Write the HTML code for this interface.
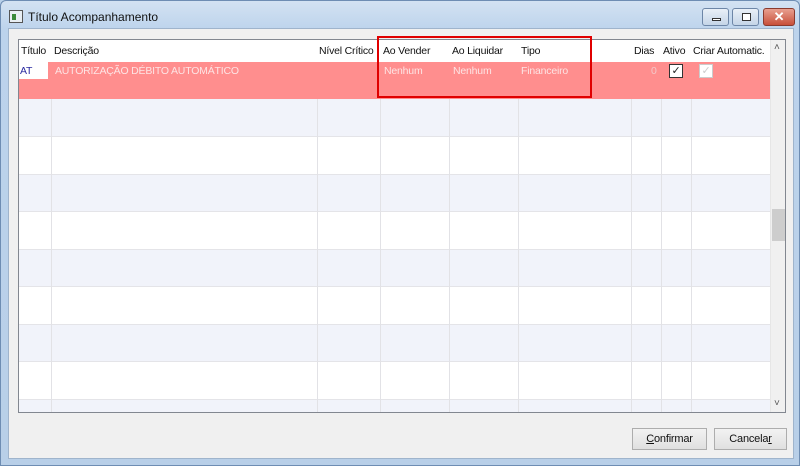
<!DOCTYPE html>
<html><head><meta charset="utf-8"><style>
*{box-sizing:border-box;margin:0;padding:0}
body{width:800px;height:466px;overflow:hidden;font-family:"Liberation Sans",sans-serif;font-size:10.5px;letter-spacing:-0.2px;background:#b9d1ea}
.frame{position:absolute;left:0;top:0;width:800px;height:466px;background:linear-gradient(#d3e2f2,#bcd3ec 30px,#b8cfe8);border:1px solid #6e8db3;border-radius:6px 6px 0 0}
.title{position:absolute;left:27px;top:9px;font-size:12px;letter-spacing:0;color:#111}
.ico{position:absolute;left:8px;top:9px;width:14px;height:13px;border:1px solid #555;background:#e8eef3}
.ico:before{content:"";position:absolute;left:2px;top:3px;width:4px;height:6px;background:#3a8a3a}
.btn{position:absolute;top:7px;height:18px;border:1px solid #6d86a7;border-radius:3px;background:linear-gradient(#e9f0f8,#c5d5e8)}
.client{position:absolute;left:7px;top:27px;width:786px;height:431px;background:#f0f0f0;border:1px solid #9fb4cc}
.grid{position:absolute;left:17px;top:38px;width:768px;height:374px;background:#fff;border:1px solid #828790;overflow:hidden}
.hdr{position:absolute;left:0;top:0;height:22px;width:751px;background:#fff;white-space:nowrap}
.hdr span{position:absolute;top:5px;color:#111}
.row{position:absolute;left:0;width:751px}
.vl{position:absolute;top:0;width:1px;height:374px;background:#e2e2e6}
.pink{position:absolute;left:0;top:22px;width:751px;height:37px;background:#ff8e8e;white-space:nowrap}
.pink span{position:absolute;top:3px;color:#fde4e4}
.cb{position:absolute;top:24px;width:14px;height:14px;background:#fff;border:1px solid #333}
.sb{position:absolute;left:751px;top:0;width:16px;height:372px;background:#f0f0f0;border-left:1px solid #e6e6e6}
.thumb{position:absolute;left:1px;top:169px;width:13px;height:32px;background:#cdcdcd}
.bt{position:absolute;top:427px;height:22px;border:1px solid #adadad;background:linear-gradient(#f2f2f2,#e0e0e0);text-align:center;line-height:20px;font-size:11px;color:#111}
</style></head><body>
<div class="frame">
<div class="ico"></div>
<div class="title">Título Acompanhamento</div>
<div class="btn" style="left:701px;width:27px"><div style="position:absolute;left:9px;top:9px;width:9px;height:3px;border:1px solid #333;background:#fff"></div></div>
<div class="btn" style="left:731px;width:27px"><div style="position:absolute;left:9px;top:4px;width:9px;height:8px;border:1px solid #333;background:#fff"></div></div>
<div class="btn" style="left:762px;width:32px;background:linear-gradient(#e8a090,#c8503a);border-color:#8a3a2e;color:#fff;text-align:center;font-weight:bold;font-size:13px;line-height:16px">✕</div>
<div class="client"></div>
<div class="grid">
<div class="row" style="top:59px;height:38px;background:#f1f3fa"></div>
<div class="row" style="top:134px;height:38px;background:#f1f3fa"></div>
<div class="row" style="top:209px;height:38px;background:#f1f3fa"></div>
<div class="row" style="top:284px;height:38px;background:#f1f3fa"></div>
<div class="row" style="top:359px;height:38px;background:#f1f3fa"></div>
<div class="row" style="top:96px;height:1px;background:#e4e4e8"></div>
<div class="row" style="top:134px;height:1px;background:#e4e4e8"></div>
<div class="row" style="top:171px;height:1px;background:#e4e4e8"></div>
<div class="row" style="top:209px;height:1px;background:#e4e4e8"></div>
<div class="row" style="top:246px;height:1px;background:#e4e4e8"></div>
<div class="row" style="top:284px;height:1px;background:#e4e4e8"></div>
<div class="row" style="top:321px;height:1px;background:#e4e4e8"></div>
<div class="row" style="top:359px;height:1px;background:#e4e4e8"></div>
<div class="vl" style="left:32px"></div><div class="vl" style="left:298px"></div><div class="vl" style="left:361px"></div><div class="vl" style="left:430px"></div><div class="vl" style="left:499px"></div><div class="vl" style="left:612px"></div><div class="vl" style="left:642px"></div><div class="vl" style="left:672px"></div>
<div class="hdr"><span style="left:2px">Título</span><span style="left:35px">Descrição</span><span style="left:300px">Nível Crítico</span><span style="left:364px">Ao Vender</span><span style="left:433px">Ao Liquidar</span><span style="left:502px">Tipo</span><span style="left:615px">Dias</span><span style="left:644px">Ativo</span><span style="left:674px">Criar Automatic.</span></div>
<div class="pink">
<div style="position:absolute;left:0;top:0;width:29px;height:17px;background:#fff"></div>
<span style="left:1px;color:#2a2aa0">AT</span>
<span style="left:36px">AUTORIZAÇÃO DÉBITO AUTOMÁTICO</span>
<span style="left:365px">Nenhum</span><span style="left:434px">Nenhum</span><span style="left:502px">Financeiro</span>
<span style="left:632px;color:#f3c8c8">0</span>
</div>
<div class="cb" style="left:650px;font-size:11px;line-height:12px;text-align:center;color:#222">✓</div>
<div class="cb" style="left:680px;border-color:#ccc;color:#ccc;font-size:11px;line-height:12px;text-align:center">✓</div>
<div class="sb"><div style="position:absolute;left:3px;top:2px;font-size:10px;color:#555">˄</div><div class="thumb"></div><div style="position:absolute;left:3px;top:358px;font-size:10px;color:#555">˅</div></div>
</div>
<div style="position:absolute;left:376px;top:35px;width:215px;height:62px;border:2px solid #e00000"></div>
<div class="bt" style="left:631px;width:75px"><u>C</u>onfirmar</div>
<div class="bt" style="left:713px;width:73px">Cancela<u>r</u></div>
</div>
</body></html>
